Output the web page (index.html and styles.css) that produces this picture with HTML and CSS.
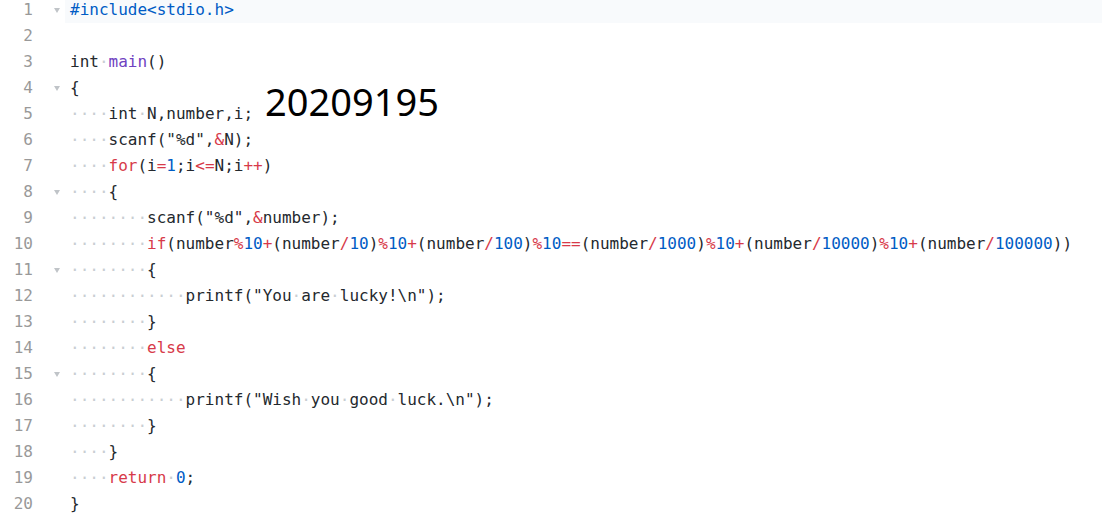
FILE: index.html
```html
<!DOCTYPE html>
<html>
<head>
<meta charset="utf-8">
<link rel="stylesheet" href="styles.css">
</head>
<body>
<div class="editor">
  <div class="code">
    <div class="line active"><span class="num">1</span><span class="fold"><i class="tri"></i></span><span class="src"><span class="m">#include&lt;stdio.h&gt;</span></span></div>
    <div class="line"><span class="num">2</span><span class="fold"></span><span class="src"></span></div>
    <div class="line"><span class="num">3</span><span class="fold"></span><span class="src">int<span class="w">·</span><span class="f">main</span>()</span></div>
    <div class="line"><span class="num">4</span><span class="fold"><i class="tri"></i></span><span class="src">{</span></div>
    <div class="line"><span class="num">5</span><span class="fold"></span><span class="src"><span class="w">····</span>int<span class="w">·</span>N,number,i;</span></div>
    <div class="line"><span class="num">6</span><span class="fold"></span><span class="src"><span class="w">····</span>scanf("%d",<span class="k">&amp;</span>N);</span></div>
    <div class="line"><span class="num">7</span><span class="fold"></span><span class="src"><span class="w">····</span><span class="k">for</span>(i<span class="k">=</span><span class="n">1</span>;i<span class="k">&lt;=</span>N;i<span class="k">++</span>)</span></div>
    <div class="line"><span class="num">8</span><span class="fold"><i class="tri"></i></span><span class="src"><span class="w">····</span>{</span></div>
    <div class="line"><span class="num">9</span><span class="fold"></span><span class="src"><span class="w">········</span>scanf("%d",<span class="k">&amp;</span>number);</span></div>
    <div class="line"><span class="num">10</span><span class="fold"></span><span class="src"><span class="w">········</span><span class="k">if</span>(number<span class="k">%</span><span class="n">10</span><span class="k">+</span>(number<span class="k">/</span><span class="n">10</span>)<span class="k">%</span><span class="n">10</span><span class="k">+</span>(number<span class="k">/</span><span class="n">100</span>)<span class="k">%</span><span class="n">10</span><span class="k">==</span>(number<span class="k">/</span><span class="n">1000</span>)<span class="k">%</span><span class="n">10</span><span class="k">+</span>(number<span class="k">/</span><span class="n">10000</span>)<span class="k">%</span><span class="n">10</span><span class="k">+</span>(number<span class="k">/</span><span class="n">100000</span>))</span></div>
    <div class="line"><span class="num">11</span><span class="fold"><i class="tri"></i></span><span class="src"><span class="w">········</span>{</span></div>
    <div class="line"><span class="num">12</span><span class="fold"></span><span class="src"><span class="w">············</span>printf("You<span class="w">·</span>are<span class="w">·</span>lucky!\n");</span></div>
    <div class="line"><span class="num">13</span><span class="fold"></span><span class="src"><span class="w">········</span>}</span></div>
    <div class="line"><span class="num">14</span><span class="fold"></span><span class="src"><span class="w">········</span><span class="k">else</span></span></div>
    <div class="line"><span class="num">15</span><span class="fold"><i class="tri"></i></span><span class="src"><span class="w">········</span>{</span></div>
    <div class="line"><span class="num">16</span><span class="fold"></span><span class="src"><span class="w">············</span>printf("Wish<span class="w">·</span>you<span class="w">·</span>good<span class="w">·</span>luck.\n");</span></div>
    <div class="line"><span class="num">17</span><span class="fold"></span><span class="src"><span class="w">········</span>}</span></div>
    <div class="line"><span class="num">18</span><span class="fold"></span><span class="src"><span class="w">····</span>}</span></div>
    <div class="line"><span class="num">19</span><span class="fold"></span><span class="src"><span class="w">····</span><span class="k">return</span><span class="w">·</span><span class="n">0</span>;</span></div>
    <div class="line"><span class="num">20</span><span class="fold"></span><span class="src">}</span></div>
  </div>
  <div class="stamp">20209195</div>
</div>
</body>
</html>
```

FILE: styles.css
```css
html, body {
  margin: 0;
  padding: 0;
  background: #ffffff;
  overflow: hidden;
}

.editor {
  position: relative;
  width: 1102px;
  height: 523px;
  overflow: hidden;
}

.code {
  margin-top: -3px;
  font-family: "DejaVu Sans Mono", "Liberation Mono", monospace;
  font-size: 16px;
  color: #24292e;
}

.line {
  display: flex;
  height: 26px;
  line-height: 26px;
  white-space: pre;
}

.num {
  width: 33px;
  flex: none;
  text-align: right;
  color: #999999;
}

.fold {
  width: 32px;
  flex: none;
  display: flex;
  align-items: center;
  padding-left: 21px;
  box-sizing: border-box;
}

.tri {
  display: block;
  width: 0;
  height: 0;
  border-left: 3px solid transparent;
  border-right: 3px solid transparent;
  border-top: 5px solid #c0c4c8;
  margin-top: 1px;
}

.src {
  flex: 1;
  padding-left: 5px;
}

.active .src {
  background: #f8fafc;
}

.w { color: #c9ced3; }
.k { color: #d73a49; }
.n { color: #005cc5; }
.m { color: #005cc5; }
.f { color: #6f42c1; }

.stamp {
  position: absolute;
  left: 265px;
  top: 82px;
  font-family: "Noto Sans", "Open Sans", sans-serif;
  font-size: 38px;
  line-height: 38px;
  color: #000000;
}
```
